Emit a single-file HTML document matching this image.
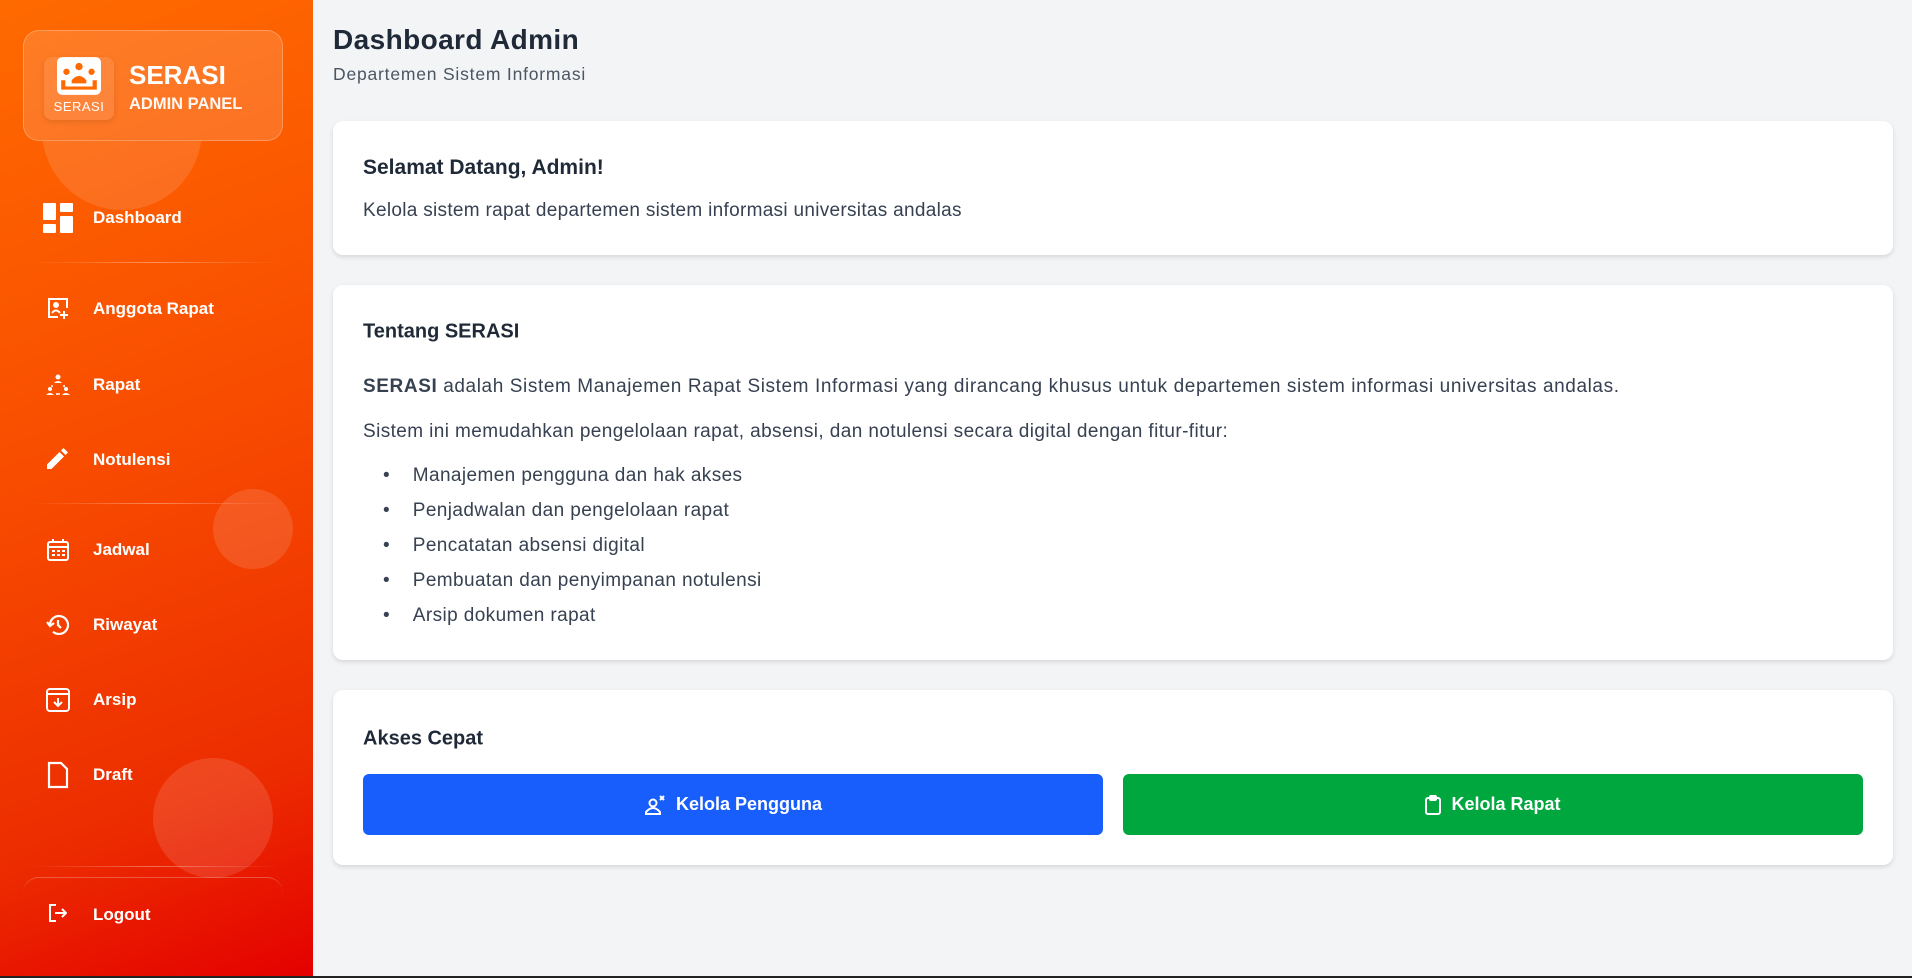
<!DOCTYPE html>
<html><head><meta charset="utf-8"><style>
*{box-sizing:border-box;margin:0;padding:0}
body{width:1912px;height:978px;overflow:hidden;background:#f3f4f6;font-family:"Liberation Sans",sans-serif;position:relative}
.sb{position:absolute;left:0;top:0;width:313px;height:978px;background:linear-gradient(160deg,#ff6a00 0%,#f84c00 45%,#ec2c00 80%,#e40000 100%);overflow:hidden;color:#fff}
.circ{position:absolute;border-radius:50%;background:rgba(255,255,255,.12)}
.hdr{position:absolute;left:23px;top:30px;width:260px;height:111px;border-radius:16px;background:rgba(255,255,255,.14);border:1px solid rgba(255,255,255,.25)}
.logo{position:absolute;left:44px;top:57px;width:70px;height:63px;border-radius:8px;background:rgba(255,255,255,.1);box-shadow:0 2px 6px rgba(0,0,0,.1)}
.nav{position:absolute;left:93px;font-size:17px;font-weight:bold;transform:translateY(-50%)}
.ic{position:absolute;transform:translateY(-50%)}
.div{position:absolute;left:30px;width:250px;height:1px;background:linear-gradient(90deg,rgba(255,255,255,0),rgba(255,255,255,.35),rgba(255,255,255,0))}
.card{position:absolute;left:333px;width:1560px;background:#fff;border-radius:10px;box-shadow:0 2px 5px rgba(0,0,0,.12)}
.t{position:absolute;left:363px;transform:translateY(-50%);color:#374151;font-size:19px;letter-spacing:0.4px;white-space:nowrap}
.h{font-size:20px;font-weight:bold;color:#1f2937;letter-spacing:0}
.btn{position:absolute;top:774px;height:61px;width:740px;border-radius:6px;color:#fff;font-size:18px;font-weight:bold;display:flex;align-items:center;justify-content:center;gap:10px}
</style></head><body>
<div class="sb">
 <div class="circ" style="left:42px;top:50px;width:160px;height:160px;clip-path:inset(91px 0 0 0)"></div>
 <div class="circ" style="left:213px;top:489px;width:80px;height:80px"></div>
 <div class="circ" style="left:153px;top:758px;width:120px;height:120px"></div>
 <div class="hdr"></div>
 <div class="logo">
  <svg style="position:absolute;left:13px;top:0px" width="44" height="38" viewBox="0 0 42 36"><rect x="0" y="0" width="42" height="36" rx="5" fill="#fff"/><g fill="#ff6a00"><circle cx="21" cy="9" r="3.5"/><circle cx="9" cy="14" r="3"/><circle cx="33" cy="14" r="3"/><path d="M14 22q7-8 14 0v3H14z"/><path d="M4 22h4v6h26v-6h4v9H4z"/></g></svg>
  <div style="position:absolute;left:0;right:0;top:42px;text-align:center;font-size:13px;color:#fff;letter-spacing:.5px">SERASI</div>
 </div>
 <div style="position:absolute;left:129px;top:60px;font-size:26px;font-weight:bold">SERASI</div>
 <div style="position:absolute;left:129px;top:95px;font-size:16.5px;font-weight:bold;opacity:.95">ADMIN PANEL</div>

 <svg class="ic" style="left:43px;top:218px" width="30" height="30" viewBox="0 0 30 30" fill="#fff"><rect x="0" y="0" width="13" height="17" rx="1"/><rect x="17" y="0" width="13" height="9" rx="1"/><rect x="0" y="21" width="13" height="9" rx="1"/><rect x="17" y="13" width="13" height="17" rx="1"/></svg>
 <div class="nav" style="top:218px">Dashboard</div>
 <div class="div" style="top:262px"></div>

 <svg class="ic" style="left:46px;top:309px" width="24" height="24" viewBox="0 0 24 24" fill="none" stroke="#fff" stroke-width="2"><path d="M12 20H3V2h18v9"/><circle cx="10" cy="8" r="2" fill="#fff"/><path d="M6 16q4-5 8 0"/><path d="M18 14v8M14 18h8"/></svg>
 <div class="nav" style="top:309px">Anggota Rapat</div>
 <svg class="ic" style="left:46px;top:385px" width="24" height="24" viewBox="0 0 24 24" fill="#fff"><circle cx="12" cy="4" r="2.5"/><path d="M8 10q4-4 8 0z"/><circle cx="4" cy="16" r="2"/><circle cx="20" cy="16" r="2"/><path d="M0 22q4-4 8 0zM16 22q4-4 8 0z"/><path d="M6 12a7 7 0 0 0 0 2M18 12a7 7 0 0 1 0 2M10 21h4" stroke="#fff" stroke-width="1.6" fill="none"/></svg>
 <div class="nav" style="top:385px">Rapat</div>
 <svg class="ic" style="left:47px;top:458px" width="22" height="22" viewBox="0 0 22 22" fill="#fff"><path d="M0 17.5V22h4.5L17 9.5 12.5 5z"/><path d="M14 3.5l2.5-2.5 4.5 4.5L18.5 8z"/></svg>
 <div class="nav" style="top:460px">Notulensi</div>
 <div class="div" style="top:503px"></div>

 <svg class="ic" style="left:47px;top:550px" width="22" height="22" viewBox="0 0 22 22" fill="none" stroke="#fff" stroke-width="2"><rect x="1" y="3" width="20" height="18" rx="2"/><path d="M1 8h20M6 0v4M16 0v4"/><g fill="#fff" stroke="none"><rect x="5" y="11" width="3" height="2"/><rect x="10" y="11" width="3" height="2"/><rect x="15" y="11" width="3" height="2"/><rect x="5" y="15" width="3" height="2"/><rect x="10" y="15" width="3" height="2"/><rect x="15" y="15" width="3" height="2"/></g></svg>
 <div class="nav" style="top:550px">Jadwal</div>
 <svg class="ic" style="left:46px;top:625px" width="24" height="24" viewBox="0 0 24 24" fill="none" stroke="#fff" stroke-width="2.2"><path d="M4 12a9 9 0 1 1 3 6.7"/><path d="M1 9l3 4 4-3"/><path d="M12 7v5l3 3"/></svg>
 <div class="nav" style="top:625px">Riwayat</div>
 <svg class="ic" style="left:46px;top:700px" width="24" height="24" viewBox="0 0 24 24" fill="none" stroke="#fff" stroke-width="2"><rect x="1" y="1" width="22" height="22" rx="3"/><path d="M1 6h22"/><path d="M12 10v8M8 14l4 4 4-4"/></svg>
 <div class="nav" style="top:700px">Arsip</div>
 <svg class="ic" style="left:47px;top:775px" width="22" height="28" viewBox="0 0 22 28" fill="none" stroke="#fff" stroke-width="2.2"><path d="M2 2h12l6 6v18H2z"/></svg>
 <div class="nav" style="top:775px">Draft</div>

 <div class="div" style="top:866px"></div>
 <div style="position:absolute;left:23px;top:877px;width:260px;height:120px;border-radius:16px;border-top:1px solid rgba(255,255,255,.25)"></div>
 <svg class="ic" style="left:49px;top:913px" width="18" height="18" viewBox="0 0 18 18" fill="none" stroke="#fff" stroke-width="2"><path d="M7 1H1v16h6M6 9h11M13 5l4 4-4 4"/></svg>
 <div class="nav" style="top:915px">Logout</div>
</div>

<div style="position:absolute;left:333px;top:24px;font-size:28px;font-weight:bold;color:#1f2937;letter-spacing:.4px">Dashboard Admin</div>
<div style="position:absolute;left:333px;top:64px;font-size:17.5px;color:#4b5563;letter-spacing:.8px">Departemen Sistem Informasi</div>

<div class="card" style="top:121px;height:134px"></div>
<div class="t h" style="top:168px;font-size:21px">Selamat Datang, Admin!</div>
<div class="t" style="top:211px;letter-spacing:.3px">Kelola sistem rapat departemen sistem informasi universitas andalas</div>

<div class="card" style="top:285px;height:375px"></div>
<div class="t h" style="top:332px">Tentang SERASI</div>
<div class="t" style="top:387px;letter-spacing:.6px"><b>SERASI</b> adalah Sistem Manajemen Rapat Sistem Informasi yang dirancang khusus untuk departemen sistem informasi universitas andalas.</div>
<div class="t" style="top:432px">Sistem ini memudahkan pengelolaan rapat, absensi, dan notulensi secara digital dengan fitur-fitur:</div>
<div class="t" style="top:476px;left:383px">•&nbsp;&nbsp;&nbsp;&nbsp;Manajemen pengguna dan hak akses</div>
<div class="t" style="top:511px;left:383px">•&nbsp;&nbsp;&nbsp;&nbsp;Penjadwalan dan pengelolaan rapat</div>
<div class="t" style="top:546px;left:383px">•&nbsp;&nbsp;&nbsp;&nbsp;Pencatatan absensi digital</div>
<div class="t" style="top:581px;left:383px">•&nbsp;&nbsp;&nbsp;&nbsp;Pembuatan dan penyimpanan notulensi</div>
<div class="t" style="top:616px;left:383px">•&nbsp;&nbsp;&nbsp;&nbsp;Arsip dokumen rapat</div>

<div class="card" style="top:690px;height:175px"></div>
<div class="t h" style="top:739px">Akses Cepat</div>
<div class="btn" style="left:363px;background:#175efc"><svg width="22" height="22" viewBox="0 0 22 22" fill="none" stroke="#fff" stroke-width="2"><circle cx="9" cy="9" r="3.5"/><path d="M2 20v-2q7-8 14 0v2z"/><path d="M16 2l4 4M20 2l-4 4"/></svg>Kelola Pengguna</div>
<div class="btn" style="left:1123px;background:#00a63e"><svg width="16" height="20" viewBox="0 0 16 20" fill="none" stroke="#fff" stroke-width="2"><rect x="1" y="3" width="14" height="16" rx="2"/><rect x="5" y="1" width="6" height="4" rx="1"/></svg>Kelola Rapat</div>
<div style="position:absolute;left:0;top:976px;width:1912px;height:2px;background:#222"></div>
</body></html>
